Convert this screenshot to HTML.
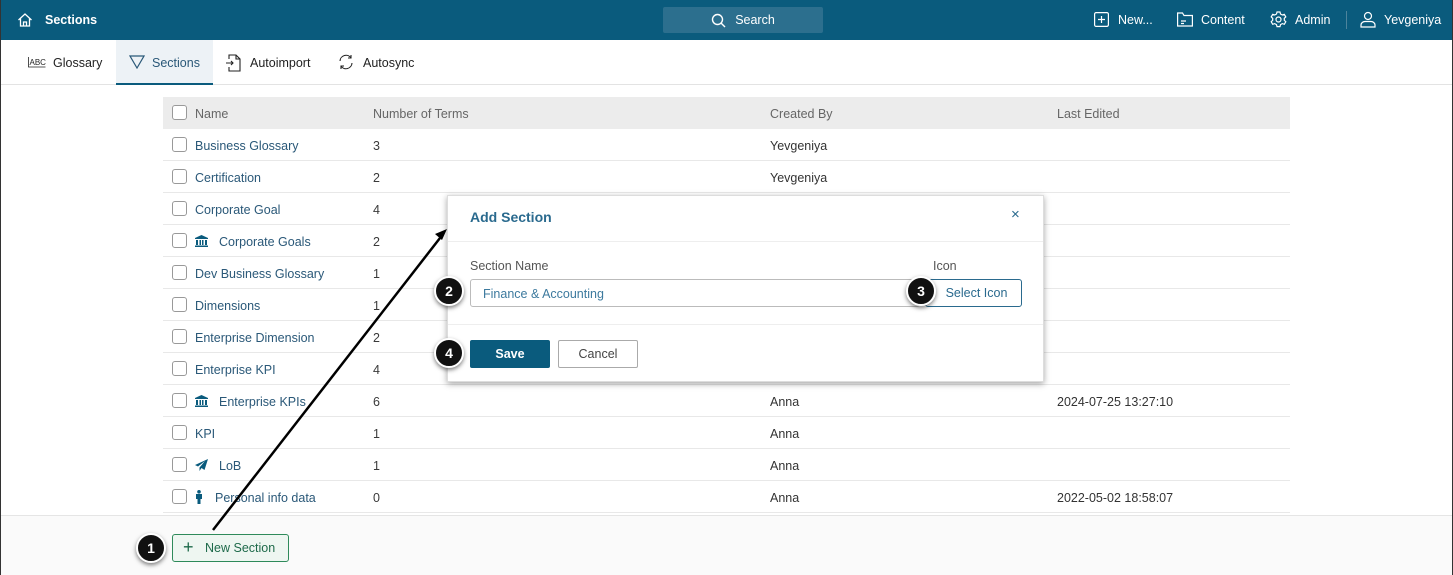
<!DOCTYPE html>
<html><head><meta charset="utf-8"><style>
*{box-sizing:border-box;margin:0;padding:0}
body{width:1453px;height:575px;overflow:hidden;background:#fff;font-family:"Liberation Sans",sans-serif;font-size:12.5px;position:relative;color:#333}
.top{position:absolute;left:0;top:0;width:1453px;height:40px;background:#0a5b7d;color:#fff}
.top .t{position:absolute;top:13px;font-weight:bold;font-size:12.5px}
.search{position:absolute;left:663px;top:7px;width:160px;height:26px;background:#2c6f8e;border-radius:2px;color:#fff;font-size:12.5px;text-align:center;line-height:26px}
.tabs{position:absolute;top:40px;left:0;width:1453px;height:45px;border-bottom:1px solid #e3e3e3}
.tab{position:absolute;top:0;height:45px;line-height:46px;font-size:12.5px;color:#222}
.tab svg{position:absolute;top:14px}
.hdr{position:absolute;left:163px;top:97px;width:1127px;height:32px;background:#ececec;color:#666}
.row{position:absolute;left:163px;width:1127px;height:32px;border-bottom:1px solid #e8e8e8}
.cb{position:absolute;left:9px;top:8px;width:15px;height:15px;border:1px solid #999;border-radius:3px;background:#fff}
.c{position:absolute;top:10px;white-space:nowrap}
.nm{color:#2a5878}
.num{color:#3a3a3a}
.foot{position:absolute;left:0;top:515px;width:1453px;height:60px;background:#fafafa;border-top:1px solid #e5e5e5}
.dlg{position:absolute;left:447px;top:195px;width:597px;height:187px;background:#fff;box-shadow:0 2px 6px rgba(0,0,0,.35);border:1px solid #ddd}
.badge{position:absolute;width:30px;height:30px;border-radius:50%;background:#111;border:2px solid #fff;box-shadow:0 2px 4px rgba(0,0,0,.5);color:#fff;font-weight:bold;font-size:14px;text-align:center;line-height:26px}
</style></head><body>
<div class="top">
<svg style="position:absolute;left:17px;top:12px" width="16" height="16" viewBox="0 0 16 16" fill="none" stroke="#fff" stroke-width="1.3"><path d="M1.5 8L8 2l6.5 6M3.5 6.5V14h9V6.5M6.5 14v-4h3v4"/></svg>
<span class="t" style="left:45px">Sections</span>
<div class="search"><svg style="position:absolute;left:48px;top:6px" width="15" height="15" viewBox="0 0 15 15" fill="none" stroke="#fff" stroke-width="1.4"><circle cx="6.5" cy="6.5" r="5"/><path d="M10 10l4 4"/></svg><span style="margin-left:24px">Search</span></div>
<svg style="position:absolute;left:1094px;top:12px" width="15" height="15" viewBox="0 0 15 15" fill="none" stroke="#fff" stroke-width="1.2"><rect x=".6" y=".6" width="13.8" height="13.8" rx="1.5"/><path d="M7.5 4v7M4 7.5h7"/></svg>
<span class="t" style="left:1118px;font-weight:normal">New...</span>
<svg style="position:absolute;left:1177px;top:12px" width="16" height="15" viewBox="0 0 16 15" fill="none" stroke="#fff" stroke-width="1.2"><path d="M.6 2V14h14.8V3.5H7L5.5 1H.6zM4 9h5M4 11.5h3"/></svg>
<span class="t" style="left:1201px;font-weight:normal">Content</span>
<svg style="position:absolute;left:1270px;top:11px" width="17" height="17" viewBox="0 0 17 17" fill="none" stroke="#fff" stroke-width="1.2"><circle cx="8.5" cy="8.5" r="2.5"/><path d="M7 1h3l.5 2 1.8 1 2-.7 1.5 2.6-1.5 1.4v2l1.5 1.4-1.5 2.6-2-.7-1.8 1-.5 2H7l-.5-2-1.8-1-2 .7L1.2 10.7l1.5-1.4v-2L1.2 5.9l1.5-2.6 2 .7 1.8-1z"/></svg>
<span class="t" style="left:1295px;font-weight:normal">Admin</span>
<div style="position:absolute;left:1346px;top:11px;width:1px;height:18px;background:#4d849c"></div>
<svg style="position:absolute;left:1360px;top:11px" width="16" height="17" viewBox="0 0 16 17" fill="none" stroke="#fff" stroke-width="1.2"><circle cx="8" cy="5" r="3.5"/><path d="M1 16v-2c0-2 2-3.5 4-3.5h6c2 0 4 1.5 4 3.5v2z"/></svg>
<span class="t" style="left:1384px;font-weight:normal">Yevgeniya</span>
</div>
<div class="tabs">
<div class="tab" style="left:28px"><svg style="left:0" width="18" height="16" viewBox="0 0 18 16"><text x="1.5" y="11" font-size="8" font-family="Liberation Sans" fill="#222">ABC</text><path d="M.5 3v10h17" stroke="#222" fill="none" stroke-width=".8"/></svg><span style="margin-left:25px">Glossary</span></div>
<div class="tab" style="left:116px;width:97px;background:#edf2f6;border-bottom:2px solid #0a5b7d;color:#2a5878"><svg style="left:13px;top:15px" width="16" height="14" viewBox="0 0 16 14" fill="none" stroke="#2a5878" stroke-width="1.2"><path d="M1 1h14L8 13z"/></svg><span style="margin-left:36px">Sections</span></div>
<div class="tab" style="left:225px"><svg style="left:0" width="16" height="18" viewBox="0 0 16 18" fill="none" stroke="#222" stroke-width="1.1"><path d="M4 5V1h7l4 4v12H4v-4M11 1v4h4M1 9h7M6 7l2 2-2 2"/></svg><span style="margin-left:25px">Autoimport</span></div>
<div class="tab" style="left:338px"><svg style="left:0" width="16" height="16" viewBox="0 0 16 16" fill="none" stroke="#222" stroke-width="1.1"><path d="M2 7a6 6 0 0 1 11-3M14 9a6 6 0 0 1-11 3M13 1v3h-3M3 15v-3h3"/></svg><span style="margin-left:25px">Autosync</span></div>
</div>
<div class="hdr"><div class="cb"></div><span class="c" style="left:32px">Name</span><span class="c" style="left:210px">Number of Terms</span><span class="c" style="left:607px">Created By</span><span class="c" style="left:894px">Last Edited</span></div>

<div class="row" style="top:129px"><div class="cb"></div><span class="c nm" style="left:32px">Business Glossary</span><span class="c num" style="left:210px">3</span><span class="c" style="left:607px">Yevgeniya</span></div>
<div class="row" style="top:161px"><div class="cb"></div><span class="c nm" style="left:32px">Certification</span><span class="c num" style="left:210px">2</span><span class="c" style="left:607px">Yevgeniya</span></div>
<div class="row" style="top:193px"><div class="cb"></div><span class="c nm" style="left:32px">Corporate Goal</span><span class="c num" style="left:210px">4</span></div>
<div class="row" style="top:225px"><div class="cb"></div><svg style="position:absolute;left:32px;top:10px" width="13" height="12" viewBox="0 0 13 12" fill="#0a5b7d"><path d="M6.5 0L0 3v1h13V3zM1 5h2v5H1zM4.5 5h1.5v5H4.5zM7 5h1.5v5H7zM10 5h2v5h-2zM0 10.5h13V12H0z"/></svg><span class="c nm" style="left:56px">Corporate Goals</span><span class="c num" style="left:210px">2</span></div>
<div class="row" style="top:257px"><div class="cb"></div><span class="c nm" style="left:32px">Dev Business Glossary</span><span class="c num" style="left:210px">1</span></div>
<div class="row" style="top:289px"><div class="cb"></div><span class="c nm" style="left:32px">Dimensions</span><span class="c num" style="left:210px">1</span></div>
<div class="row" style="top:321px"><div class="cb"></div><span class="c nm" style="left:32px">Enterprise Dimension</span><span class="c num" style="left:210px">2</span></div>
<div class="row" style="top:353px"><div class="cb"></div><span class="c nm" style="left:32px">Enterprise KPI</span><span class="c num" style="left:210px">4</span></div>
<div class="row" style="top:385px"><div class="cb"></div><svg style="position:absolute;left:32px;top:10px" width="13" height="12" viewBox="0 0 13 12" fill="#0a5b7d"><path d="M6.5 0L0 3v1h13V3zM1 5h2v5H1zM4.5 5h1.5v5H4.5zM7 5h1.5v5H7zM10 5h2v5h-2zM0 10.5h13V12H0z"/></svg><span class="c nm" style="left:56px">Enterprise KPIs</span><span class="c num" style="left:210px">6</span><span class="c" style="left:607px">Anna</span><span class="c" style="left:894px">2024-07-25 13:27:10</span></div>
<div class="row" style="top:417px"><div class="cb"></div><span class="c nm" style="left:32px">KPI</span><span class="c num" style="left:210px">1</span><span class="c" style="left:607px">Anna</span></div>
<div class="row" style="top:449px"><div class="cb"></div><svg style="position:absolute;left:32px;top:10px" width="13" height="12" viewBox="0 0 13 12" fill="#0a5b7d"><path d="M13 0L0 6l3 1.5L10 2 4.5 8.5V12l2-3 3 2z"/></svg><span class="c nm" style="left:56px">LoB</span><span class="c num" style="left:210px">1</span><span class="c" style="left:607px">Anna</span></div>
<div class="row" style="top:481px"><div class="cb"></div><svg style="position:absolute;left:32px;top:9px" width="8" height="14" viewBox="0 0 8 14" fill="#0a5b7d"><circle cx="4" cy="1.8" r="1.8"/><path d="M1 4h6v5H5.5v5h-3V9H1z"/></svg><span class="c nm" style="left:52px">Personal info data</span><span class="c num" style="left:210px">0</span><span class="c" style="left:607px">Anna</span><span class="c" style="left:894px">2022-05-02 18:58:07</span></div>

<div class="foot"></div>
<div style="position:absolute;left:172px;top:534px;width:117px;height:28px;border:1px solid #2e8a5a;border-radius:3px;background:#eef6f1;color:#1e6a4a;line-height:26px;font-size:12.5px"><span style="position:absolute;left:10px;font-size:18px;top:-1px">+</span><span style="position:absolute;left:32px">New Section</span></div>

<div class="dlg">
<div style="position:absolute;left:22px;top:13px;font-size:14px;font-weight:bold;color:#2a6a8e">Add Section</div>
<div style="position:absolute;left:563px;top:10px;font-size:15px;color:#2a6a8e">×</div>
<div style="position:absolute;left:0;top:45px;width:100%;height:1px;background:#eee"></div>
<div style="position:absolute;left:22px;top:63px;color:#555">Section Name</div>
<div style="position:absolute;left:485px;top:63px;color:#555">Icon</div>
<div style="position:absolute;left:22px;top:83px;width:450px;height:28px;border:1px solid #bbb;border-radius:3px;color:#3d7a9e;padding:7px 12px">Finance &amp; Accounting</div>
<div style="position:absolute;left:477px;top:83px;width:97px;height:28px;border:1px solid #2a6a8e;border-radius:3px;color:#2a6a8e;text-align:center;line-height:26px;padding-left:6px">Select Icon</div>
<div style="position:absolute;left:0;top:128px;width:100%;height:1px;background:#eee"></div>
<div style="position:absolute;left:22px;top:144px;width:80px;height:28px;background:#0a5b7d;border-radius:2px;color:#fff;text-align:center;line-height:28px;font-weight:bold">Save</div>
<div style="position:absolute;left:110px;top:144px;width:80px;height:28px;border:1px solid #aaa;border-radius:2px;color:#444;text-align:center;line-height:26px">Cancel</div>
</div>

<svg style="position:absolute;left:0;top:0" width="1453" height="575"><line x1="213" y1="530" x2="440" y2="238" stroke="#000" stroke-width="2.5"/><path d="M447 229l-12 5 7 6z" fill="#000"/></svg>
<div class="badge" style="left:136px;top:533px">1</div>
<div class="badge" style="left:434px;top:276px">2</div>
<div class="badge" style="left:906px;top:276px">3</div>
<div class="badge" style="left:434px;top:338px">4</div>
<div style="position:absolute;left:0;top:0;width:1px;height:575px;background:#333"></div>
<div style="position:absolute;right:0;top:0;width:1px;height:575px;background:#333"></div>
</body></html>
